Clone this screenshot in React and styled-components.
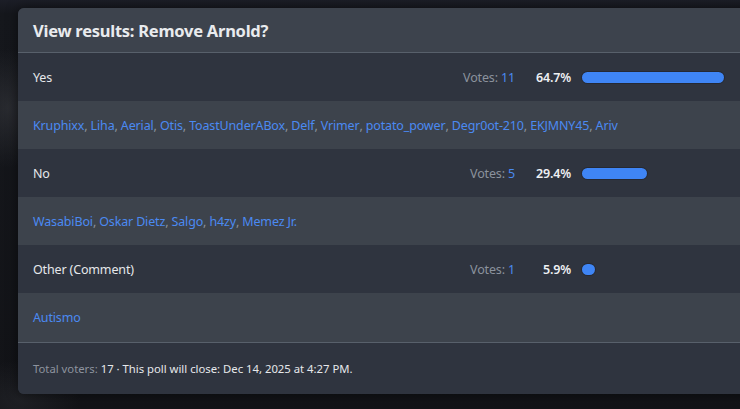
import React from "react";
import styled, { createGlobalStyle } from "styled-components";

const Global = createGlobalStyle`
  html, body { margin: 0; padding: 0; }
  body {
    width: 740px;
    height: 409px;
    overflow: hidden;
    background:
      radial-gradient(ellipse 40px 60px at 8px 108px, rgba(80,82,88,0.35), rgba(80,82,88,0) 100%),
      radial-gradient(ellipse 60px 40px at 20px 400px, rgba(60,62,68,0.3), rgba(60,62,68,0) 100%),
      linear-gradient(#1c1e27 0px, #15171c 14px, #121317 100%);
    font-family: "Noto Sans", "Open Sans", sans-serif;
    -webkit-font-smoothing: antialiased;
  }
`;

const Page = styled.div`
  padding: 8px 0 0 18px;
`;

const Panel = styled.section`
  width: 799px;
  border-radius: 6px;
  overflow: hidden;
  background: #2f343f;
  box-shadow: 0 0 12px rgba(0, 0, 0, 0.5);
`;

const Header = styled.h2`
  margin: 0;
  height: 44px;
  display: flex;
  align-items: center;
  padding: 0 15px;
  background: #3d434d;
  border-bottom: 1px solid #58606b;
  color: #e9ebee;
  font-size: 16.5px;
  font-weight: 700;
  letter-spacing: -0.25px;
`;

const OptionRow = styled.div`
  height: 48px;
  display: flex;
  align-items: center;
  padding: 0 15px;
  background: #2f343f;
  font-size: 12.5px;
  letter-spacing: -0.15px;
  color: #e6e8eb;
`;

const OptionLabel = styled.div`
  flex: 1;
`;

const Votes = styled.div`
  color: #8b929d;
  white-space: nowrap;
`;

const Count = styled.span`
  color: #4a8af0;
`;

const Percent = styled.div`
  width: 56px;
  text-align: right;
  font-weight: 600;
  color: #eef0f3;
`;

const Track = styled.div`
  width: 220px;
  margin-left: 11px;
  height: 11px;
  display: flex;
`;

const Fill = styled.div`
  height: 11px;
  min-width: 13px;
  border-radius: 6px;
  background: #3f85f5;
  box-shadow: 0 0 0 1px rgba(20, 24, 32, 0.35);
`;

const VotersRow = styled.div`
  height: ${(p) => (p.$last ? 49 : 48)}px;
  display: flex;
  align-items: center;
  padding: 0 15px;
  background: #3d434c;
  font-size: 12.5px;
  letter-spacing: -0.15px;
  color: #8b929d;
`;

const Voter = styled.span`
  color: #4b8af2;
`;

const Footer = styled.div`
  height: 51px;
  display: flex;
  align-items: center;
  padding: 0 15px;
  background: #2f343f;
  border-top: 1px solid #58606b;
  font-size: 11.3px;
  color: #8d939e;
`;

const Strong = styled.span`
  color: #e6e8eb;
`;

const options = [
  {
    label: "Yes",
    votes: 11,
    pct: 64.7,
    voters: ["Kruphixx", "Liha", "Aerial", "Otis", "ToastUnderABox", "Delf", "Vrimer", "potato_power", "Degr0ot-210", "EKJMNY45", "Ariv"],
  },
  {
    label: "No",
    votes: 5,
    pct: 29.4,
    voters: ["WasabiBoi", "Oskar Dietz", "Salgo", "h4zy", "Memez Jr."],
  },
  {
    label: "Other (Comment)",
    votes: 1,
    pct: 5.9,
    voters: ["Autismo"],
  },
];

export default function App() {
  return (
    <>
      <Global />
      <Page>
        <Panel>
          <Header>View results: Remove Arnold?</Header>
          {options.map((o, idx) => (
            <React.Fragment key={o.label}>
              <OptionRow>
                <OptionLabel>{o.label}</OptionLabel>
                <Votes>
                  Votes: <Count>{o.votes}</Count>
                </Votes>
                <Percent>{o.pct}%</Percent>
                <Track>
                  <Fill style={{ width: `${o.pct}%` }} />
                </Track>
              </OptionRow>
              <VotersRow $last={idx === options.length - 1}>
                {o.voters.map((v, i) => (
                  <React.Fragment key={v}>
                    <Voter>{v}</Voter>
                    {i < o.voters.length - 1 ? ",\u00a0" : ""}
                  </React.Fragment>
                ))}
              </VotersRow>
            </React.Fragment>
          ))}
          <Footer>
            Total voters:&nbsp;<Strong>17 · This poll will close: Dec 14, 2025 at 4:27 PM.</Strong>
          </Footer>
        </Panel>
      </Page>
    </>
  );
}
